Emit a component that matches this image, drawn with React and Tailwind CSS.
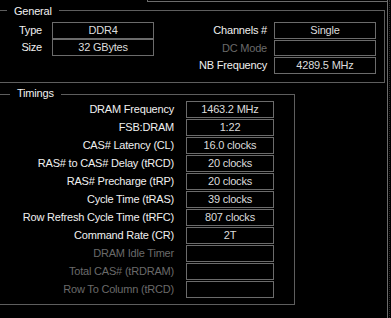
import React from 'react';

const general = {
  left: [
    { label: 'Type', value: 'DDR4' },
    { label: 'Size', value: '32 GBytes' },
  ],
  right: [
    { label: 'Channels #', value: 'Single', h: 'h-[17px]' },
    { label: 'DC Mode', value: '', h: 'h-[16px]', off: true },
    { label: 'NB Frequency', value: '4289.5 MHz', h: 'h-[17px]' },
  ],
};

const timings = [
  { label: 'DRAM Frequency', value: '1463.2 MHz' },
  { label: 'FSB:DRAM', value: '1:22' },
  { label: 'CAS# Latency (CL)', value: '16.0 clocks' },
  { label: 'RAS# to CAS# Delay (tRCD)', value: '20 clocks' },
  { label: 'RAS# Precharge (tRP)', value: '20 clocks' },
  { label: 'Cycle Time (tRAS)', value: '39 clocks' },
  { label: 'Row Refresh Cycle Time (tRFC)', value: '807 clocks' },
  { label: 'Command Rate (CR)', value: '2T' },
  { label: 'DRAM Idle Timer', value: '', off: true },
  { label: 'Total CAS# (tRDRAM)', value: '', off: true },
  { label: 'Row To Column (tRCD)', value: '', off: true },
];

// group box with the title sitting on the top line
function Group({ title, lead, top, className, children }) {
  return (
    <div className={`flex flex-col ${className}`}>
      <div className="flex h-[14px]">
        <div className={`${lead} ${top} border-t border-[#5e5e5e]`} />
        <span className="px-[7px] leading-[14px] text-[#f2f2f2]">{title}</span>
        <div className={`flex-1 ${top} border-t border-r border-[#5e5e5e]`} />
      </div>
      <div className="border-r border-b border-[#5e5e5e]">{children}</div>
    </div>
  );
}

function Field({ value, className }) {
  return (
    <div className={`border border-[#6b6b6b] text-center leading-[15px] text-[#dcdcdc] ${className}`}>
      {value}
    </div>
  );
}

export default function App() {
  return (
    <div className="w-[391px] h-[318px] bg-black overflow-hidden flex font-['Liberation_Sans',Arial,sans-serif] text-[11px] tracking-[-0.2px]">
      <div className="w-[388px] flex flex-col">
        {/* tab strip */}
        <div className="flex h-[2px]">
          <div className="w-[148px] border-r border-[#6b6b6b]" />
          <div className="flex-1 border-b border-r border-[#6b6b6b]" />
        </div>

        <div className="flex-1 border-r border-[#6b6b6b] pr-[2px] pt-[2px]">
          {/* General */}
          <Group title="General" lead="w-[7px]" top="mt-[6px]">
            <div className="flex pt-[4px] pb-[8px] pr-[8px]">
              <div className="flex flex-col">
                {general.left.map((r) => (
                  <div key={r.label} className="flex h-[17px]">
                    <div className="w-[42px] text-right leading-[17px] text-[#f0f0f0]">{r.label}</div>
                    <Field value={r.value} className="ml-[10px] w-[102px] h-[17px]" />
                  </div>
                ))}
              </div>
              <div className="flex-1 flex flex-col items-end gap-[1px]">
                {general.right.map((r) => (
                  <div key={r.label} className={`flex ${r.h}`}>
                    <div className={`text-right leading-[17px] ${r.off ? 'text-[#6a6a6a]' : 'text-[#f0f0f0]'}`}>
                      {r.label}
                    </div>
                    <Field value={r.value} className={`ml-[7px] w-[102px] ${r.h}`} />
                  </div>
                ))}
              </div>
            </div>
          </Group>

          {/* Timings */}
          <Group title="Timings" lead="w-[10px]" top="mt-[8px]" className="mt-[3px] w-[295px]">
            <div className="flex flex-col items-end gap-[1px] pt-[1px] pb-[6px] pr-[20px]">
              {timings.map((r) => (
                <div key={r.label} className="flex h-[17px]">
                  <div className={`text-right leading-[17px] ${r.off ? 'text-[#6a6a6a]' : 'text-[#f0f0f0]'}`}>
                    {r.label}
                  </div>
                  <Field value={r.value} className="ml-[12px] w-[88px] h-[17px]" />
                </div>
              ))}
            </div>
          </Group>
        </div>
      </div>
      <div className="w-[1px] ml-[1px] border-l border-dotted border-[#2c2c2c]" />
    </div>
  );
}
